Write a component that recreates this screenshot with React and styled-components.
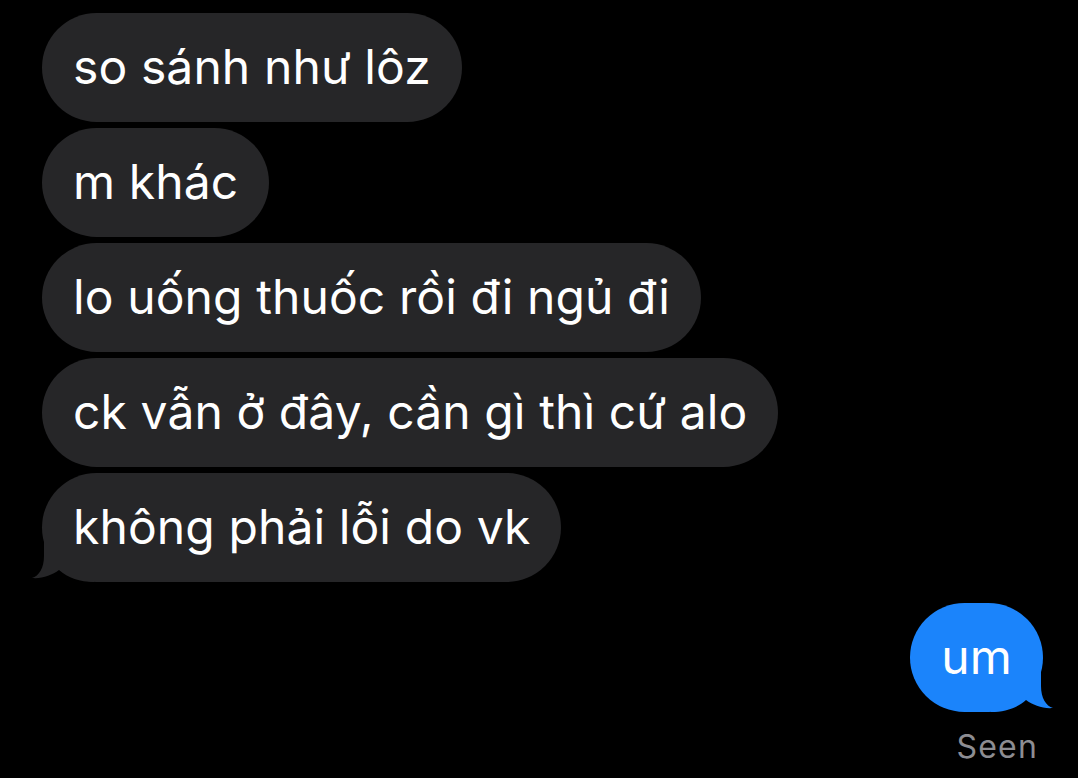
import styled, { createGlobalStyle } from 'styled-components';

const GlobalStyle = createGlobalStyle`
    html, body {
        margin: 0;
        padding: 0;
        background: #000;
    }
    body {
        font-family: Inter, "Noto Sans", "Liberation Sans", sans-serif;
        -webkit-font-smoothing: antialiased;
    }
`;

const incoming = [
    'so sánh như lôz',
    'm khác',
    'lo uống thuốc rồi đi ngủ đi',
    'ck vẫn ở đây, cần gì thì cứ alo',
    'không phải lỗi do vk',
];

const Tail = ({ color, flip }) => (
    <TailSvg $flip={flip} width="64" height="44" viewBox="0 0 64 44">
        <path
            d="M14 0 L14 18 C14 30 9 38 2 40 C12 41 22 37 29 32 C38 40 50 44 64 44 L64 0 Z"
            fill={color}
        />
    </TailSvg>
);

const App = () => {
    return (
        <Screen>
            <GlobalStyle />
            <Thread>
                {incoming.map((text, i) => (
                    <Bubble key={i}>
                        {i === incoming.length - 1 && <Tail color="#262628" />}
                        <Label>{text}</Label>
                    </Bubble>
                ))}
            </Thread>
            <Outgoing>
                <Bubble $me>
                    <Tail color="#1b84fb" flip />
                    <Label>um</Label>
                </Bubble>
                <Status>Seen</Status>
            </Outgoing>
        </Screen>
    );
};

export default App;

const Screen = styled.div`
    width: 1078px;
    height: 778px;
    box-sizing: border-box;
    padding: 13px 35px 0 42px;
    background: #000;
    overflow: hidden;
`;

const Thread = styled.div`
    display: flex;
    flex-direction: column;
    align-items: flex-start;
    gap: 6px;
`;

const Bubble = styled.div`
    position: relative;
    height: 109px;
    box-sizing: border-box;
    display: flex;
    align-items: center;
    padding: 0 31px 2px;
    border-radius: 55px;
    background: ${(p) => (p.$me ? '#1b84fb' : '#262628')};
    color: #fff;
    font-size: 48px;
    letter-spacing: 0.1px;
    white-space: nowrap;
`;

const Label = styled.span`
    position: relative;
    z-index: 1;
`;

const TailSvg = styled.svg`
    position: absolute;
    bottom: 0;
    z-index: 0;
    ${(p) => (p.$flip ? 'right: -12px; transform: scaleX(-1);' : 'left: -12px;')}
`;

const Outgoing = styled.div`
    display: flex;
    flex-direction: column;
    align-items: flex-end;
    margin-top: 21px;
`;

const Status = styled.div`
    margin-top: 15px;
    margin-right: 5px;
    color: #8d8d92;
    font-size: 32px;
    letter-spacing: 1.2px;
`;
